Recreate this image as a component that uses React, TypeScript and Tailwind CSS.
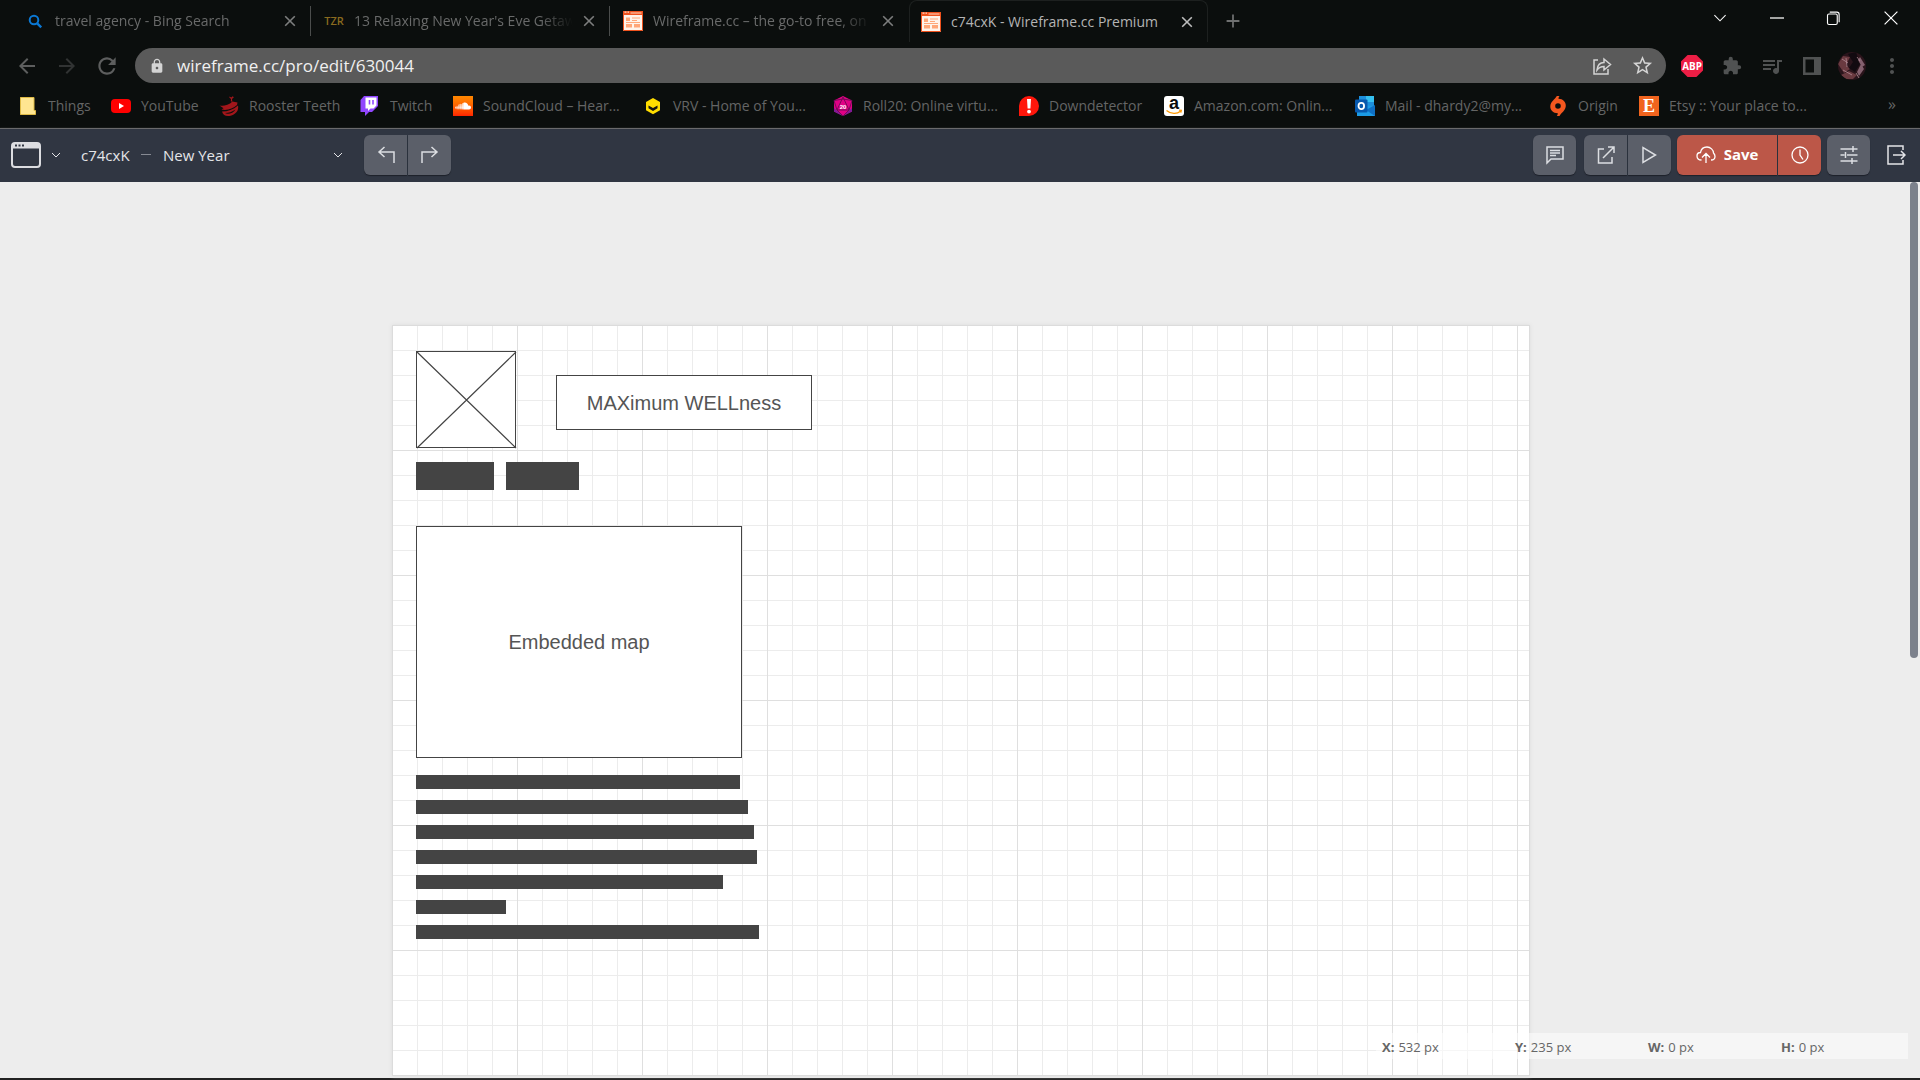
import React from "react";
import { MdArrowBack, MdArrowForward, MdExtension, MdLock, MdMoreVert, MdQueueMusic, MdRefresh, MdStarBorder } from "react-icons/md";
import { FaSoundcloud } from "react-icons/fa";

/* ---------- favicons ---------- */

function SearchIcon() {
  return (
    <svg viewBox="0 0 20 20" className="size-5" fill="none" stroke="#0b78d4" strokeWidth="2">
      <circle cx="9" cy="9" r="4.3" />
      <path d="M12.2 12.4l4 4" strokeWidth="2.4" />
    </svg>
  );
}

function WireframeIcon() {
  return (
    <svg viewBox="0 0 20 20" className="size-5">
      <rect y="1" width="20" height="19" rx="1" fill="#fff3ea" />
      <path d="M0 0h20v4H0z" fill="#f0521d" />
      <path d="M1.5 1.2h2M4.5 1.2h1.5M7.5 2h11" stroke="#ffd9c5" strokeWidth="1.2" />
      <path d="M.5 3v16.500h19V3" fill="none" stroke="#f0521d" />
      <path d="M3 6.500h4v3.500H3zM3 13h6v3.500H3zM11 13h6v3.500h-6z" fill="#ffa678" />
      <path d="M9 7h8M9 9.500h5M3 11.500h14" stroke="#ffa678" />
    </svg>
  );
}

function FolderIcon() {
  return (
    <svg viewBox="0 0 20 20" className="size-5">
      <path d="M2 1.5h14v13h1.5v4H2z" fill="#ffe591" />
      <path d="M2.5 1.5h13.500v13h1.500v4h-15z" fill="none" stroke="#dfba45" />
    </svg>
  );
}

function YouTubeIcon() {
  return (
    <svg viewBox="0 0 20 20" className="size-5">
      <rect y="3" width="20" height="14" rx="4" fill="#f00" />
      <path d="M8 7l5 3-5 3z" fill="#fff" />
    </svg>
  );
}

function RoosterIcon() {
  return (
    <svg viewBox="0 0 20 20" className="size-5" fill="#a3161b">
      <path d="M10.500.5l1.700 1 1.500-1.300 1.200 1-1.900 1.900.3 2.400h-1.500l.2-2.500-1.700-1.500z" />
      <path d="M.5 9.500c3 1 9 0 13-4l5 1-.5 2.500C14 12.500 8 15 2.500 13.500l2-1.200z" />
      <path fillRule="evenodd" d="M3 15.500c6 0 11-2 16-6 1 5-2 9-7.500 10.300C7.500 20.500 4 19.500 3 15.500zm3 1.500c2.500 1.500 8.500.5 10.500-3.500C13 16 10 17 6 17z" />
    </svg>
  );
}

function TwitchIcon() {
  return (
    <svg viewBox="0 0 20 20" className="size-5">
      <path d="M4 0h14v10l-6 6H9l-4 4v-4H.5V4z" fill="#9146ff" />
      <path d="M5.500 1.500h11v8l-3 3h-3L8 15v-2.500H5.500z" fill="#fff" />
      <path d="M9.500 4v4.500M13 4v4.500" stroke="#9146ff" strokeWidth="1.600" />
    </svg>
  );
}

function SoundCloudIcon() {
  return (
    <span className="flex size-5 items-center justify-center bg-linear-to-b from-[#ff8800] to-[#ff2200] text-white">
      <FaSoundcloud className="size-4" />
    </span>
  );
}

function VrvIcon() {
  return (
    <svg viewBox="0 0 20 20" className="size-5">
      <path d="M10 2l7 4v8.200l-7 4-7-4V6z" fill="#ffdd00" />
      <path d="M5.500 9.500L10 12l4.500-2.500v2.700L10 15l-4.500-2.800z" fill="#151515" />
    </svg>
  );
}

function Roll20Icon() {
  return (
    <svg viewBox="0 0 20 20" className="size-5">
      <path d="M10 0l9 4.500v11L10 20l-9-4.500v-11z" fill="#e10085" />
      <path d="M1 12l9 8 9-8v3.500L10 20l-9-4.500z" fill="#7d1b97" />
      <path d="M10 1L4 14h12zM1 4.500L4 14l6 6 6-6 3-9.500M1 4.500L10 3l9 1.500" fill="none" stroke="#6b0c52" strokeWidth=".9" />
      <text x="10" y="12.500" textAnchor="middle" fontSize="6" fontWeight="700" fontFamily="Liberation Sans, sans-serif" fill="#fff">20</text>
    </svg>
  );
}

function DownIcon() {
  return (
    <svg viewBox="0 0 20 20" className="size-5">
      <path d="M10 0a10 10 0 010 20H0V10A10 10 0 0110 0z" fill="#ff160b" />
      <path d="M8 3h4l-.6 9.500H8.600z" fill="#fff" />
      <circle cx="10" cy="15.600" r="1.900" fill="#fff" />
    </svg>
  );
}

function AmazonIcon() {
  return (
    <svg viewBox="0 0 20 20" className="size-5 overflow-visible">
      <rect width="20" height="20" rx="3" fill="#fff" />
      <text x="10" y="13" textAnchor="middle" fontSize="18" fontWeight="700" fontFamily="Liberation Sans, sans-serif" fill="#0a0a0a">a</text>
      <path d="M2.500 14.500c4.500 3.800 10.500 3.800 14 .8M15 14.200l2.300.2-.5 2.200" fill="none" stroke="#f90" strokeWidth="1.300" />
    </svg>
  );
}

function OutlookIcon() {
  return (
    <svg viewBox="0 0 20 20" className="size-5">
      <path d="M4 0h15v10H4z" fill="#1d8fdc" />
      <path d="M11 0h8v6h-8z" fill="#35c0f0" />
      <path d="M2 9l18 1v10H2z" fill="#1b9be6" />
      <path d="M20 9v11l-9-6z" fill="#0f6fc4" />
      <rect y="3.500" width="12.500" height="13" rx="1" fill="#0758ad" />
      <ellipse cx="6.300" cy="10" rx="2.800" ry="3.200" fill="none" stroke="#fff" strokeWidth="1.800" />
    </svg>
  );
}

function OriginIcon() {
  return (
    <svg viewBox="0 0 20 20" className="size-5">
      <path fillRule="evenodd" fill="#f4571f" d="M11.500 0c-.8 1-1 1.800-1 2.700C15 2.800 18 6 17.800 10c-.3 4.500-4.300 6.500-6.300 10H8.800c.8-1 1-1.800 1-2.700C5 17.200 2 14 2.300 10 2.600 5.500 6.800 3.500 8.800 0zM10 7.200a2.800 2.800 0 100 5.600 2.800 2.800 0 000-5.600z" />
    </svg>
  );
}

function EtsyIcon() {
  return (
    <span className="flex size-5 items-center justify-center bg-[#f1641e] font-['Liberation_Serif',serif] text-lg leading-5 font-bold text-white">
      E
    </span>
  );
}

/* ---------- line icons ---------- */

function Line({ d, className = "size-5", width = 1.5 }: { d: string; className?: string; width?: number }) {
  return (
    <svg viewBox="0 0 20 20" className={className} fill="none" stroke="currentColor" strokeWidth={width} aria-hidden="true">
      <path d={d} />
    </svg>
  );
}

const CHEVRON = "M2 6l8 8 8-8";
const CROSS = "M4 4l12 12M16 4L4 16";

/* ---------- browser chrome ---------- */

const tabs = [
  { title: "travel agency - Bing Search", icon: <SearchIcon />, edge: "border-r border-[#4b4d4c]" },
  {
    title: "13 Relaxing New Year's Eve Getaw",
    icon: <span className="font-['Open_Sans',sans-serif] text-[11px] font-semibold text-[#8a6a1f]">TZR</span>,
    edge: "border-r border-[#4b4d4c]",
  },
  { title: "Wireframe.cc – the go-to free, on", icon: <WireframeIcon />, edge: "border-r border-transparent" },
];

function TabContent({ title, icon, active = false }: { title: string; icon: React.ReactNode; active?: boolean }) {
  return (
    <>
      <button role="tab" aria-selected={active} className="flex min-w-0 flex-1 items-center gap-2.5 text-left">
        <span className="flex size-5 shrink-0 items-center justify-center">{icon}</span>
        <span
          className={
            active
              ? "min-w-0 flex-1 whitespace-nowrap text-[#b4b4b4]"
              : "min-w-0 flex-1 whitespace-nowrap mask-r-from-85% text-[#696a6a]"
          }
        >
          {title}
        </span>
      </button>
      <button aria-label={"Close " + title} className={active ? "text-[#bdbdbd]" : "text-[#7d7e7e]"}>
        <Line d={CROSS} className="size-4" width={2} />
      </button>
    </>
  );
}

function TabStrip() {
  return (
    <div className="flex h-11 items-start pr-px pl-3">
      <div role="tablist" className="flex text-sm">
        {tabs.map((t) => (
          <div key={t.title} className="flex h-[42px] w-[299px] items-center">
            <div className={"flex h-[30px] w-full items-center gap-2 pr-3 pl-[13px] " + t.edge}>
              <TabContent title={t.title} icon={t.icon} />
            </div>
          </div>
        ))}
        <div className="flex h-[42px] w-[299px] items-center gap-2 rounded-t-lg border-x border-t border-[#1d201f] pr-3 pl-[11px]">
          <TabContent title="c74cxK - Wireframe.cc Premium" icon={<WireframeIcon />} active />
        </div>
      </div>
      <button aria-label="New tab" className="ml-[17px] flex h-[42px] items-center text-[#6f7070]">
        <Line d="M10 2v16M2 10h16" className="size-4" width={2.2} />
      </button>
      <div className="ml-auto flex h-9 text-white">
        <button aria-label="Search tabs" className="flex w-[57px] items-center justify-center">
          <Line d={CHEVRON} className="size-3.5" />
        </button>
        <button aria-label="Minimize" className="flex w-[57px] items-center justify-center">
          <Line d="M0 10h20" className="size-3.5" width={1.8} />
        </button>
        <button aria-label="Restore" className="flex w-[57px] items-center justify-center">
          <Line d="M4 4h9q2 0 2 2v10q0 2-2 2H4q-2 0-2-2V6q0-2 2-2zM5 1.500h9.500q3 0 3 3V15" className="size-[15px]" />
        </button>
        <button aria-label="Close window" className="flex w-[57px] items-center justify-center">
          <Line d="M2 2l16 16M18 2L2 18" className="size-4" />
        </button>
      </div>
    </div>
  );
}

function Avatar() {
  return (
    <svg viewBox="0 0 28 28" className="size-7">
      <clipPath id="avatar-clip">
        <circle cx="14" cy="14" r="14" />
      </clipPath>
      <g clipPath="url(#avatar-clip)">
        <path d="M0 0h28v28H0z" fill="#2a141b" />
        <path d="M0 12l5-8 7 1-4 8 4 4-6 4zM3 23l8-4 8 4-4 4H8z" fill="#6a3a40" />
        <path d="M10 2l8-2 4 12-5 8-6-4 4-6z" fill="#120a10" />
        <path d="M22 5l5 8-3 2-4-7zM19 20l4-8 3 5-5 7z" fill="#84606e" />
        <path d="M19 5l3 4M18 21l3 5M4 7l6 4M5 18l9 5M8 6l1 9" stroke="#b08a94" strokeWidth=".8" fill="none" />
      </g>
    </svg>
  );
}

function AddressRow() {
  return (
    <div className="flex h-[43px] items-center pr-2 pl-3.5">
      <div className="flex w-[121px] items-center gap-3.5 text-[#5d5e5e]">
        <button aria-label="Back"><MdArrowBack className="size-[26px] p-px" /></button>
        <button aria-label="Forward" className="text-[#313333]"><MdArrowForward className="size-[26px] p-px" /></button>
        <button aria-label="Reload"><MdRefresh className="size-[26px]" /></button>
      </div>
      <div className="flex h-[35px] flex-1 items-center rounded-full bg-[#5a5a5a] pr-3 pl-3.5 text-[#d4d4d4]">
        <MdLock className="size-4 shrink-0" />
        <input
          aria-label="Address"
          defaultValue="wireframe.cc/pro/edit/630044"
          className="ml-3 min-w-0 flex-1 bg-transparent text-[17px] leading-6 text-[#f0f0f0] outline-none"
        />
        <button aria-label="Share this page">
          <Line d="M6 4H2v14h14v-5M5 14c.5-5 3-7.500 7-7.500V3l6.500 5.500L12 14v-3.500c-3 0-5 .8-7 3.500z" />
        </button>
        <button aria-label="Bookmark this tab" className="ml-[19px]"><MdStarBorder className="size-[23px]" /></button>
      </div>
      <div className="flex items-center pl-1.5 text-[#505252]">
        <button aria-label="AdBlock Plus" className="flex w-10 justify-center">
          <svg viewBox="0 0 20 20" className="size-[22px]">
            <path d="M6 0h8l6 6v8l-6 6H6l-6-6V6z" fill="#ed1e45" />
            <text x="10" y="13.400" textAnchor="middle" fontSize="9" fontWeight="700" fontFamily="Open Sans, sans-serif" fill="#fff">ABP</text>
          </svg>
        </button>
        <button aria-label="Extensions" className="flex w-10 justify-center"><MdExtension className="size-5" /></button>
        <button aria-label="Media controls" className="flex w-10 justify-center"><MdQueueMusic className="size-6" /></button>
        <button aria-label="Side panel" className="flex w-10 justify-center">
          <svg viewBox="0 0 20 20" className="size-5"><path fillRule="evenodd" fill="currentColor" d="M1 1h18v18H1zm2.500 2.500v13H12v-13z" /></svg>
        </button>
        <button aria-label="Profile" className="flex w-10 justify-center"><Avatar /></button>
        <button aria-label="Browser menu" className="flex w-10 justify-center"><MdMoreVert className="size-6" /></button>
      </div>
    </div>
  );
}

const bookmarks = [
  { label: "Things", icon: <FolderIcon />, width: "w-[93px]" },
  { label: "YouTube", icon: <YouTubeIcon />, width: "w-[108px]" },
  { label: "Rooster Teeth", icon: <RoosterIcon />, width: "w-[141px]" },
  { label: "Twitch", icon: <TwitchIcon />, width: "w-[93px]" },
  { label: "SoundCloud – Hear...", icon: <SoundCloudIcon />, width: "w-[190px]" },
  { label: "VRV - Home of You...", icon: <VrvIcon />, width: "w-[190px]" },
  { label: "Roll20: Online virtu...", icon: <Roll20Icon />, width: "w-[186px]" },
  { label: "Downdetector", icon: <DownIcon />, width: "w-[145px]" },
  { label: "Amazon.com: Onlin...", icon: <AmazonIcon />, width: "w-[191px]" },
  { label: "Mail - dhardy2@my...", icon: <OutlookIcon />, width: "w-[193px]" },
  { label: "Origin", icon: <OriginIcon />, width: "w-[91px]" },
  { label: "Etsy :: Your place to...", icon: <EtsyIcon />, width: "w-[190px]" },
];

function BookmarksBar() {
  return (
    <nav aria-label="Bookmarks" className="flex h-[41px] items-center pr-6 pb-3px pb-[3px] pl-[18px] text-sm text-[#646565]">
      {bookmarks.map((b) => (
        <a key={b.label} href="#" className={"flex shrink-0 items-center gap-2.5 whitespace-nowrap " + b.width}>
          <span className="shrink-0">{b.icon}</span>
          {b.label}
        </a>
      ))}
      <button aria-label="More bookmarks" className="ml-auto pb-1 text-base">»</button>
    </nav>
  );
}

/* ---------- editor toolbar ---------- */

const toolButton = "flex h-10 w-[43px] items-center justify-center bg-[#5b5f69] text-[#dcdee2] shadow-[0_1px_1px_#1d212a]";

function EditorToolbar() {
  return (
    <header className="flex h-[54px] items-center border-t border-[#6a6a6c] bg-[#303642] pr-3.5 pb-0.5 pl-[11px] text-[#e4e5e8] shadow-[0_1px_2px_#a0a0a0]">
      <button aria-label="Page type" className="flex items-center gap-2.5">
        <svg viewBox="0 0 30 26" className="h-[26px] w-[30px]">
          <rect x="1" y="1" width="28" height="24" rx="3" fill="none" stroke="#dcdde1" strokeWidth="2" />
          <path d="M1 1h28v5.500H1z" fill="#dcdde1" />
          <path d="M4 3.500h2M7.500 3.500h2M11 3.500h2" stroke="#303642" strokeWidth="2" />
        </svg>
        <Line d={CHEVRON} className="size-2.5" width={2} />
      </button>
      <span className="ml-5 w-[50px] pt-0.5 text-[15px] font-medium">c74cxK</span>
      <span className="ml-2.5 h-px w-2.5 bg-[#868a93]" />
      <div className="relative ml-3 w-[180px]">
        <select aria-label="Page" className="w-full appearance-none bg-transparent pt-0.5 text-[15px] font-medium outline-none">
          <option>New Year</option>
        </select>
        <span className="pointer-events-none absolute inset-y-0 right-0 flex items-center">
          <Line d={CHEVRON} className="size-2.5" width={2} />
        </span>
      </div>
      <div className="ml-[21px] flex gap-px">
        <button aria-label="Undo" className={toolButton + " rounded-l-md"}>
          <Line d="M8.500 2L3 7l5.500 5M3 7h15v11" />
        </button>
        <button aria-label="Redo" className={toolButton + " rounded-r-md"}>
          <Line d="M11.500 2L17 7l-5.500 5M17 7H2v11" />
        </button>
      </div>

      <div className="ml-auto flex items-center gap-2">
        <button aria-label="Comments" className={toolButton + " rounded-md"}>
          <Line d="M2 2h16v12H6l-4 4zM5 5.500h10M5 8h10M5 10.500h6" />
        </button>
        <div className="flex gap-px">
          <button aria-label="Share" className={toolButton + " rounded-l-md"}>
            <Line d="M8 4H2.500v14H16v-6M7 13L18 2M12 2h6v6" />
          </button>
          <button aria-label="Preview" className={toolButton + " rounded-r-md"}>
            <Line d="M3 2.500v15L15.500 10z" />
          </button>
        </div>
        <div className="-ml-0.5 flex gap-px text-white">
          <button className="flex h-10 w-[100px] items-center justify-center gap-2 rounded-l-md bg-[#bc5748] text-[15px] font-bold shadow-[0_1px_1px_#1d212a]">
            <Line d="M5.500 15C2.500 15 1 13.500 1 11c0-2 1.500-3.500 3.500-3.500C5 4.500 7.500 2 11 2c3.500 0 6.500 3 6.500 6 1 1 1.500 2 1.500 3.500 0 2-1.500 3.500-4 3.500M10 18V8.500M6 12.500l4-4 4 4" width={1.3} />
            Save
          </button>
          <button aria-label="History" className="flex h-10 w-[43px] items-center justify-center rounded-r-md bg-[#bc5748] shadow-[0_1px_1px_#1d212a]">
            <Line d="M18 10a8 8 0 11-16 0 8 8 0 0116 0zM10 4.500V10l3 4.500" width={1.3} />
          </button>
        </div>
        <button aria-label="Settings" className={toolButton + " -ml-0.5 rounded-md"}>
          <Line d="M1.500 4h17M1.500 10h4M8 10h10.500M1.500 16h17M14 1v6M6.500 7v6M13 13v6" />
        </button>
        <button aria-label="Exit" className="ml-2 flex h-10 items-center">
          <Line d="M17 5V1H2v18h15v-4M7 10h12M15 6l4 4-4 4" className="size-5" />
        </button>
      </div>
    </header>
  );
}

/* ---------- canvas ---------- */

const grid =
  "bg-[linear-gradient(to_right,transparent_124px,#dfdfdf_124px),linear-gradient(to_bottom,transparent_124px,#dfdfdf_124px),linear-gradient(to_right,transparent_24px,#ececec_24px),linear-gradient(to_bottom,transparent_24px,#ececec_24px)] bg-size-[125px_125px,125px_125px,25px_25px,25px_25px]";

const textBars = ["w-[324px]", "w-[332px]", "w-[338px]", "w-[341px]", "w-[307px]", "w-[90px]", "w-[343px]"];

const stats = [
  ["X:", "532 px"],
  ["Y:", "235 px"],
  ["W:", "0 px"],
  ["H:", "0 px"],
];

function Workspace() {
  return (
    <main className="relative flex flex-1 flex-col bg-[#ededed] pt-[143px] pr-[390px] pb-0.5 pl-[392px]">
      <section className={"relative flex-1 border border-[#dcdcdc] bg-white shadow-[0_0_4px_#dcdcdc] " + grid}>
        <div className="absolute top-[25px] left-[23px] h-[97px] w-[100px] border border-[#444] bg-white">
          <svg viewBox="0 0 98 95" preserveAspectRatio="none" className="h-full w-full overflow-visible" stroke="#444" strokeWidth="1.200">
            <path d="M0 0l99 96M99 0L0 96" />
          </svg>
        </div>
        <div className="absolute top-[49px] left-[163px] flex h-[55px] w-[256px] items-center justify-center border border-[#444] bg-white font-['Liberation_Sans',sans-serif] text-xl text-[#555]">
          MAXimum WELLness
        </div>
        <div className="absolute top-[136px] left-[23px] flex gap-3">
          <div className="h-7 w-[78px] bg-[#444]" />
          <div className="h-7 w-[73px] bg-[#444]" />
        </div>
        <div className="absolute top-[200px] left-[23px] flex h-[232px] w-[326px] items-center justify-center border border-[#444] bg-white font-['Liberation_Sans',sans-serif] text-xl text-[#555]">
          Embedded map
        </div>
        <div className="absolute top-[449px] left-[23px] flex flex-col gap-[11px]">
          {textBars.map((w) => (
            <div key={w} className={"h-3.5 bg-[#444] " + w} />
          ))}
        </div>
      </section>

      <dl className="absolute right-3 bottom-[19px] flex h-[26px] w-[532px] items-center bg-white/50 pt-[3px] pl-1.5 text-[13px] text-[#666]">
        {stats.map(([k, v]) => (
          <div key={k} className="flex w-[133px] shrink-0 gap-1">
            <dt className="font-bold">{k}</dt>
            <dd>{v}</dd>
          </div>
        ))}
      </dl>
      <div className="absolute top-0 right-0.5 h-[476px] w-2 rounded-full bg-[#7c818c]" />
    </main>
  );
}

export default function App() {
  return (
    <div className="flex min-h-screen flex-col overflow-hidden bg-[#0b0e0d] font-['Open_Sans',sans-serif]">
      <TabStrip />
      <AddressRow />
      <BookmarksBar />
      <EditorToolbar />
      <Workspace />
      <div className="h-0.5 bg-[#222]" />
    </div>
  );
}
